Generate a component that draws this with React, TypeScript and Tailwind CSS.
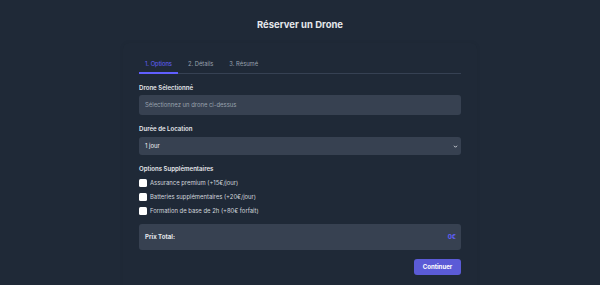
import { useState } from "react";

const options = [
  "Assurance premium (+15€/jour)",
  "Batteries supplémentaires (+20€/jour)",
  "Formation de base de 2h (+80€ forfait)",
];

const tabs = ["1. Options", "2. Détails", "3. Résumé"];

export default function App() {
  const [tab, setTab] = useState(0);
  const [checked, setChecked] = useState<boolean[]>([false, false, false]);

  return (
    <div className="min-h-screen bg-[#1f2937] font-['Inter',sans-serif] text-gray-200">
      <h1 className="pt-[19px] text-center text-[9.5px] font-bold leading-[12px] text-gray-200">
        Réserver un Drone
      </h1>

      <div className="mx-auto mt-[12px] w-[354px] rounded-md bg-[#1f2937] px-4 pt-4 pb-4 shadow-[0_0_4px_rgba(0,0,0,0.06)]">
        <div className="flex gap-[4px] border-b border-gray-700">
          {tabs.map((t, i) => (
            <button
              key={t}
              onClick={() => setTab(i)}
              className={`-mb-px px-[6px] pb-[3px] text-[5.8px] leading-[10px] ${
                tab === i ? "border-b-2 border-indigo-500 text-indigo-500" : "border-b-2 border-transparent text-gray-400"
              }`}
            >
              {t}
            </button>
          ))}
        </div>

        <div className="mt-[9px] text-[6.1px] font-semibold leading-[10px] text-gray-200">Drone Sélectionné</div>
        <div className="mt-[2px] flex h-[20px] items-center rounded-[3px] bg-[#374151] px-[6px] text-[5.9px] text-gray-400">
          Sélectionnez un drone ci-dessus
        </div>

        <div className="mt-[9px] text-[6.1px] font-semibold leading-[10px] text-gray-200">Durée de Location</div>
        <div className="mt-[3px] flex h-[18px] items-center justify-between rounded-[3px] bg-[#374151] pl-[6px] pr-[3px] text-[5.9px] text-gray-100">
          <span>1 jour</span>
          <svg width="5" height="5" viewBox="0 0 10 10" fill="none" stroke="#d1d5db" strokeWidth="2">
            <path d="M2 3.5 5 6.5 8 3.5" />
          </svg>
        </div>

        <div className="mt-[9px] text-[6.1px] font-semibold leading-[10px] text-gray-200">Options Supplémentaires</div>
        <div className="mt-[4px] flex flex-col gap-[4px]">
          {options.map((o, i) => (
            <label key={o} className="flex h-[10px] items-center gap-[3px] text-[5.9px] text-gray-300">
              <span
                onClick={() => setChecked(checked.map((c, j) => (j === i ? !c : c)))}
                className={`h-[8px] w-[8px] rounded-[1.5px] ${checked[i] ? "bg-indigo-500" : "bg-white"}`}
              />
              {o}
            </label>
          ))}
        </div>

        <div className="mt-[8px] flex h-[26px] items-center justify-between rounded-[3px] bg-[#374151] pl-[6px] pr-[5px] text-[6.1px] font-bold">
          <span className="text-gray-200">Prix Total:</span>
          <span className="text-indigo-500">0€</span>
        </div>

        <div className="mt-[9px] flex justify-end">
          <button className="h-[16px] w-[47px] rounded-[3px] bg-[#5b5bd6] text-[6.1px] font-bold text-white">
            Continuer
          </button>
        </div>
      </div>
    </div>
  );
}
